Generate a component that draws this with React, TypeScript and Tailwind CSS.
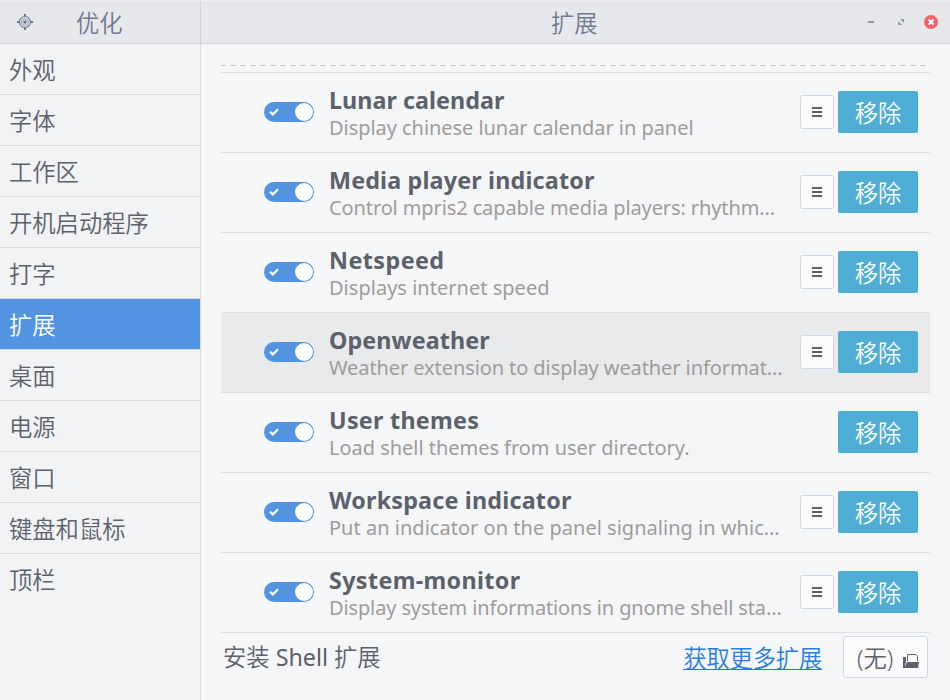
import React from "react";

const sections = ["外观", "字体", "工作区", "开机启动程序", "打字", "扩展", "桌面", "电源", "窗口", "键盘和鼠标", "顶栏"];

type Extension = {
  name: string;
  nameTracking: string;
  description: string;
  descriptionTracking: string;
  settings: boolean;
  hovered?: boolean;
};

const extensions: Extension[] = [
  {
    name: "Lunar calendar",
    nameTracking: "tracking-[0.05px]",
    description: "Display chinese lunar calendar in panel",
    descriptionTracking: "tracking-[-0.05px]",
    settings: true,
  },
  {
    name: "Media player indicator",
    nameTracking: "tracking-[0.17px]",
    description: "Control mpris2 capable media players: rhythm…",
    descriptionTracking: "tracking-[-0.11px]",
    settings: true,
  },
  {
    name: "Netspeed",
    nameTracking: "tracking-[0.45px]",
    description: "Displays internet speed",
    descriptionTracking: "tracking-[0.02px]",
    settings: true,
  },
  {
    name: "Openweather",
    nameTracking: "tracking-[0.1px]",
    description: "Weather extension to display weather informat…",
    descriptionTracking: "tracking-[-0.09px]",
    settings: true,
    hovered: true,
  },
  {
    name: "User themes",
    nameTracking: "tracking-[0.27px]",
    description: "Load shell themes from user directory.",
    descriptionTracking: "tracking-[-0.03px]",
    settings: false,
  },
  {
    name: "Workspace indicator",
    nameTracking: "tracking-[0.2px]",
    description: "Put an indicator on the panel signaling in whic…",
    descriptionTracking: "tracking-[0.02px]",
    settings: true,
  },
  {
    name: "System-monitor",
    nameTracking: "tracking-[0.36px]",
    description: "Display system informations in gnome shell sta…",
    descriptionTracking: "tracking-[-0.13px]",
    settings: true,
  },
];

function TargetIcon() {
  return (
    <svg width="16" height="16" viewBox="0 0 16 16" fill="none" stroke="#6e7a94">
      <circle cx="8" cy="8" r="5.5" strokeWidth="1.2" />
      <circle cx="8" cy="8" r="3.4" strokeWidth="0.7" />
      <circle cx="8" cy="8" r="1.8" fill="#6e7a94" stroke="none" />
      <path d="M8 0v2.6M8 13.4V16M0 8h2.6M13.4 8H16" strokeWidth="2" />
    </svg>
  );
}

function Switch() {
  return (
    <button className="flex h-5 w-[50px] shrink-0 items-center justify-between rounded-full bg-[#5294e2] pr-px pl-[5px]">
      <svg width="10" height="8" viewBox="0 0 10 8" fill="none" stroke="#fff" strokeWidth="2.2">
        <path d="M1 3.8 3.8 6.4 9 1.2" />
      </svg>
      <span className="size-[18px] rounded-full bg-white" />
    </button>
  );
}

function MenuIcon() {
  return (
    <svg width="10" height="10" viewBox="0 0 10 10" fill="#5c616c">
      <path d="M0 0h10v2H0zM0 4h10v2H0zM0 8h10v2H0z" />
    </svg>
  );
}

function FolderIcon() {
  return (
    <svg className="block" width="16" height="14" viewBox="0 0 16 14" fill="#5c616c">
      <path d="M0 3h3v5L2 11v3H0z" />
      <path d="M4.500 7V.5H12.500L14.500 2.500V7" fill="none" stroke="#5c616c" />
      <path d="M4 8h12l-1 6H1.500L3 10z" />
    </svg>
  );
}

function ExtensionRow({ name, nameTracking, description, descriptionTracking, settings, hovered }: Extension) {
  return (
    <li className={`flex h-20 items-center border-b border-[#dcdfe3] pr-3 pb-px pl-[43px] ${hovered ? "bg-[#e9eaeb]" : ""}`}>
      <Switch />
      <div className="ml-[15px] w-[460px] pt-[3px] whitespace-nowrap">
        <div className={`h-7 text-[23.3px] leading-7 font-bold text-[#5c616c] ${nameTracking}`}>{name}</div>
        <div className={`h-[27px] text-[20px] leading-[27px] text-[#a09c9c] ${descriptionTracking}`}>{description}</div>
      </div>
      <div className="ml-auto flex items-center gap-1">
        {settings && (
          <button className="flex size-[34px] items-center justify-center rounded-[3px] border border-[#cfd6e6] bg-[#fbfbfc]">
            <MenuIcon />
          </button>
        )}
        <button className="flex h-[42px] w-20 items-center justify-center rounded-[2px] bg-[#4dadd4] pt-1 text-[23.3px] leading-none font-[350] text-white">
          移除
        </button>
      </div>
    </li>
  );
}

export default function App() {
  return (
    <div className="flex h-[700px] w-[950px] flex-col overflow-hidden bg-[#f5f6f7] font-['Noto_Sans','Noto_Sans_CJK_SC',sans-serif] text-[23.3px] text-[#5c616c]">
      <header className="flex h-11 shrink-0 border-b border-[#d3d5d9] border-t border-t-[#eeeff1] bg-[#e7e8eb] text-[#707a91]">
        <div className="flex w-[201px] items-center border-r border-[#d3d5d9] pl-[17px]">
          <TargetIcon />
          <h1 className="ml-[43px] pt-1 leading-none font-[350]">优化</h1>
        </div>
        <div className="flex flex-1 items-center">
          <h2 className="ml-[350px] pt-1 leading-none font-[350]">扩展</h2>
          <div className="ml-auto flex items-center pr-3">
            <span className="h-0.5 w-1.5 bg-[#8f95a5]" />
            <svg className="ml-6" width="6" height="6" viewBox="0 0 6 6" fill="#8f95a5">
              <path d="M2 0h4v4zM0 2v4h4z" />
            </svg>
            <svg className="ml-5" width="14" height="14" viewBox="0 0 14 14">
              <circle cx="7" cy="7" r="7" fill="#f9606a" />
              <path d="m4.500 4.500 5 5m0-5-5 5" stroke="#fff" strokeWidth="2" />
            </svg>
          </div>
        </div>
      </header>
      <div className="flex min-h-0 flex-1">
        <nav className="w-[201px] shrink-0 border-r border-[#d9dbdf] bg-[#f2f3f5]">
          {sections.map((section) => (
            <div
              key={section}
              className={`flex h-[51px] items-center border-b pt-1 pl-[9px] leading-none font-[350] ${
                section === "扩展"
                  ? "border-[#d9dbdf] bg-[#5294e2] text-white"
                  : section === "顶栏"
                    ? "border-transparent"
                    : "border-[#d9dbdf]"
              }`}
            >
              {section}
            </div>
          ))}
        </nav>
        <main className="flex-1 pr-5 pl-5">
          <div className="h-[29px] border-b border-[#dcdfe3] pt-[21px]">
            <svg className="block" width="709" height="1">
              <path d="M-1 .5h707" stroke="#dadbdd" strokeDasharray="6 4" />
              <path d="M0 .5h705" stroke="#bdbfc2" strokeDasharray="4 6" />
            </svg>
          </div>
          <ul>
            {extensions.map((extension) => (
              <ExtensionRow key={extension.name} {...extension} />
            ))}
          </ul>
          <div className="flex h-12 items-center pr-0.5 pl-0.5">
            <span className="font-[350]">
              安装 <span className="font-normal">Shell</span> 扩展
            </span>
            <a className="mt-0.5 mr-[21px] ml-auto border-b border-[#2a76d9] leading-[22px] font-[350] tracking-[-0.2px] text-[#2a7de1]">
              获取更多扩展
            </a>
            <button className="flex h-[42px] w-[85px] items-center rounded-[3px] border border-[#cfd6e6] bg-[#fbfbfc] pl-[13px]">
              <span className="pt-0.5 font-[350]">(无)</span>
              <span className="mt-2 ml-2.5">
                <FolderIcon />
              </span>
            </button>
          </div>
        </main>
      </div>
    </div>
  );
}
